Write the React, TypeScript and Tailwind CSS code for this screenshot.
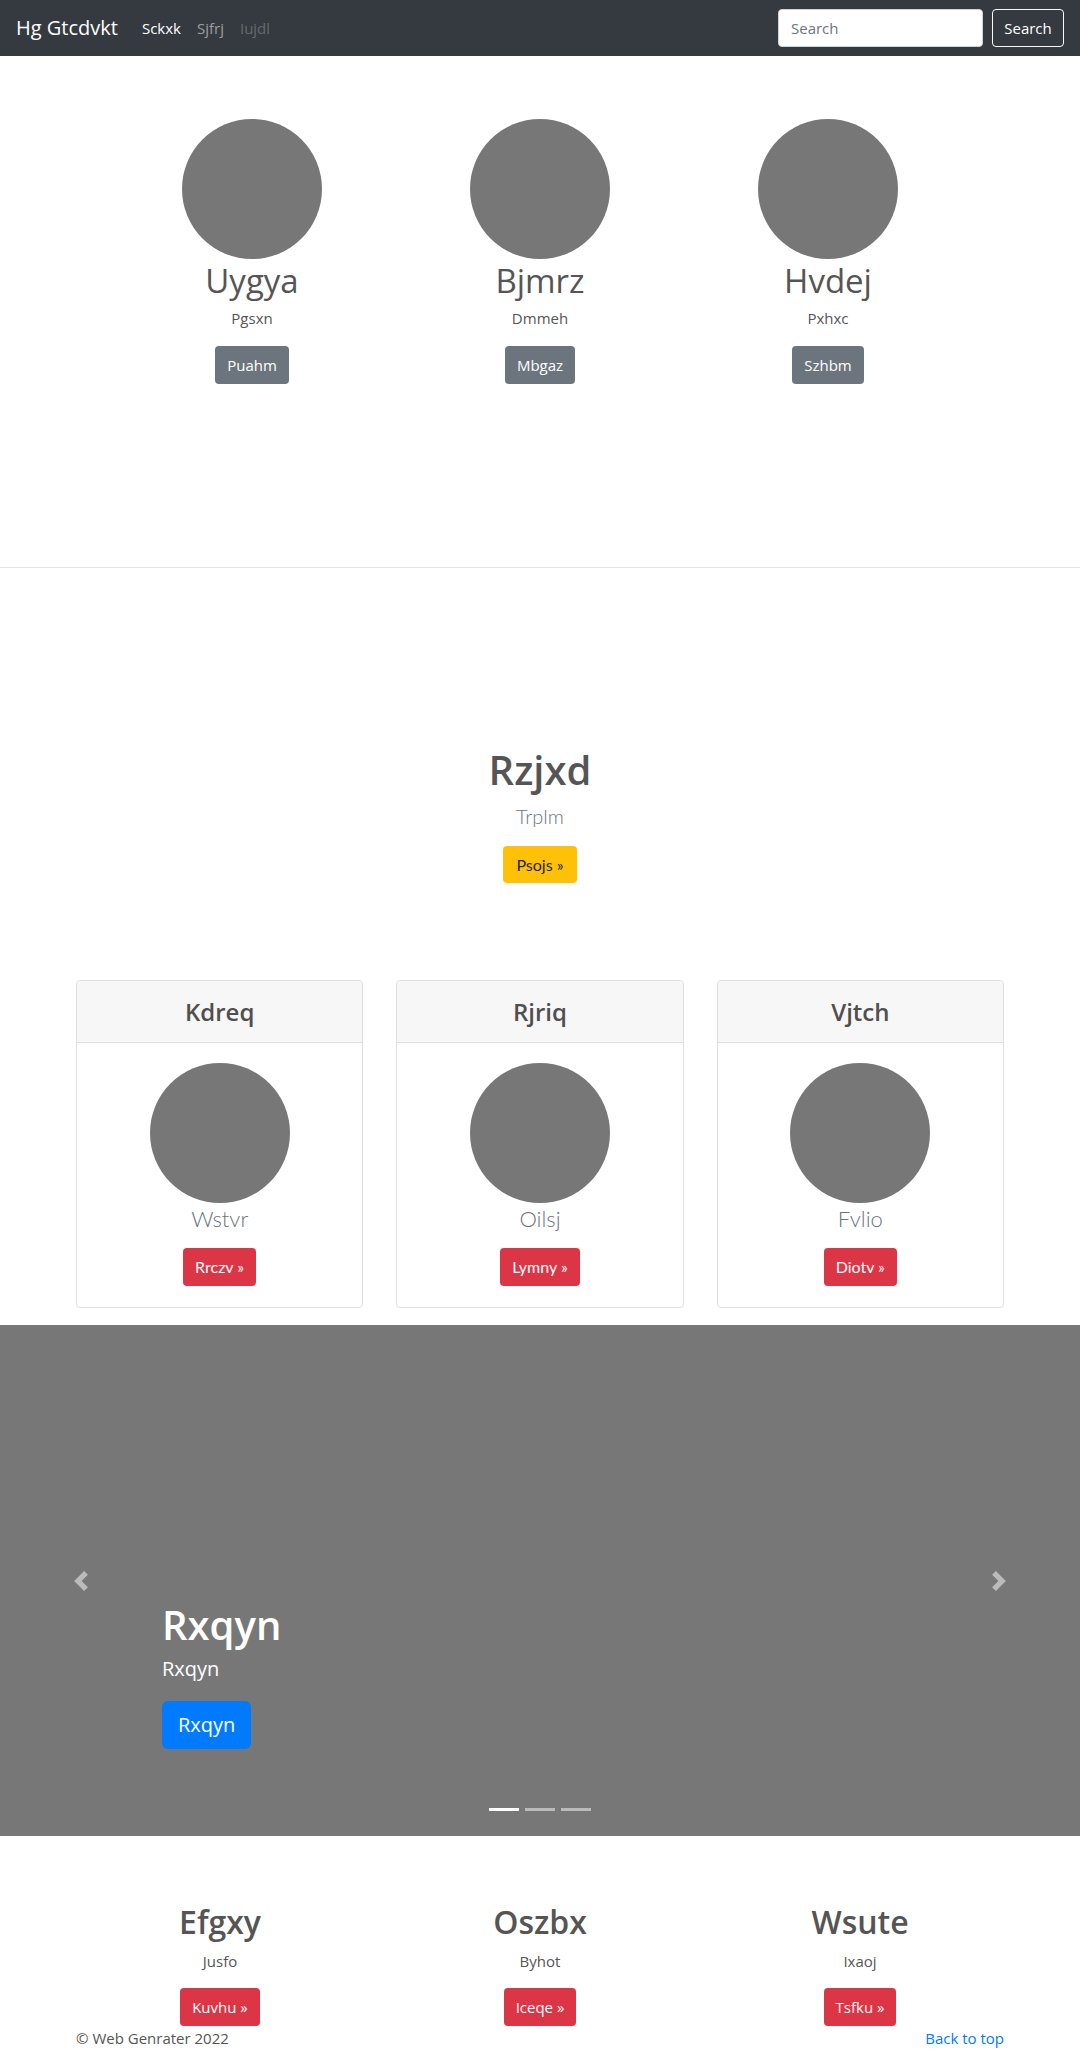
import React from "react";

const sans = { fontFamily: '"Open Sans", "Noto Sans", sans-serif' };

function Circle() {
  return <div className="w-[140px] h-[140px] rounded-full bg-[#777777]" />;
}

const top = [
  { t: "Uygya", s: "Pgsxn", b: "Puahm" },
  { t: "Bjmrz", s: "Dmmeh", b: "Mbgaz" },
  { t: "Hvdej", s: "Pxhxc", b: "Szhbm" },
];

const cards = [
  { h: "Kdreq", s: "Wstvr", b: "Rrczv »" },
  { h: "Rjriq", s: "Oilsj", b: "Lymny »" },
  { h: "Vjtch", s: "Fvlio", b: "Diotv »" },
];

const bottom = [
  { t: "Efgxy", s: "Jusfo", b: "Kuvhu »" },
  { t: "Oszbx", s: "Byhot", b: "Iceqe »" },
  { t: "Wsute", s: "Ixaoj", b: "Tsfku »" },
];

export default function App() {
  return (
    <div className="w-[1080px] h-[2050px] overflow-hidden bg-white text-[#555]" style={sans}>
      {/* Navbar */}
      <nav className="h-[56px] bg-[#343a40] flex items-center px-4">
        <span className="text-white text-[20px] leading-[30px] mr-4">Hg Gtcdvkt</span>
        <div className="flex items-center text-[15px]">
          <span className="px-2 text-white">Sckxk</span>
          <span className="px-2 text-white/50">Sjfrj</span>
          <span className="px-2 text-white/25">Iujdl</span>
        </div>
        <div className="ml-auto flex items-center">
          <input
            className="w-[205px] h-[38px] rounded bg-white px-3 text-[15px] text-[#495057] placeholder:text-[#6c757d] border border-[#ced4da] outline-none"
            placeholder="Search"
            style={sans}
          />
          <button className="ml-[9px] h-[38px] w-[72px] rounded border border-[#f8f9fa] text-white text-[15px]">
            Search
          </button>
        </div>
      </nav>

      {/* Top three */}
      <section className="h-[512px] pt-[63px] border-b border-[#e5e5e5]">
        <div className="w-[864px] mx-auto grid grid-cols-3">
          {top.map((c) => (
            <div key={c.t} className="flex flex-col items-center">
              <Circle />
              <h2 className="mt-[2px] text-[33px] leading-[40px] font-normal">{c.t}</h2>
              <p className="mt-[5px] text-[15px] leading-[24px]">{c.s}</p>
              <button className="mt-[16px] h-[38px] px-3 rounded bg-[#6c757d] text-white text-[15px]">
                {c.b}
              </button>
            </div>
          ))}
        </div>
      </section>

      {/* Jumbotron */}
      <section className="pt-[178px] flex flex-col items-center">
        <h1 className="text-[40px] leading-[48px] font-semibold">Rzjxd</h1>
        <p className="mt-[7px] text-[20px] leading-[30px] font-light text-[#6c757d]" style={{ fontFamily: "Lato, sans-serif" }}>
          Trplm
        </p>
        <button
          className="mt-[15px] h-[37px] w-[74px] rounded bg-[#ffc107] text-[#212529] text-[16px]"
          style={{ fontFamily: "Lato, sans-serif" }}
        >
          Psojs »
        </button>
      </section>

      {/* Cards */}
      <section className="mt-[97px] w-[928px] mx-auto grid grid-cols-3 gap-[33px]">
        {cards.map((c) => (
          <div key={c.h} className="h-[328px] rounded border border-[#dfdfdf] flex flex-col">
            <div className="h-[62px] bg-[#f7f7f7] border-b border-[#dfdfdf] flex items-center justify-center rounded-t">
              <span className="text-[24px] font-semibold text-[#4f4f4f]">{c.h}</span>
            </div>
            <div className="flex flex-col items-center pt-[20px]" style={{ fontFamily: "Lato, sans-serif" }}>
              <Circle />
              <p className="mt-[1px] text-[22px] leading-[30px] font-light text-[#6c757d]">{c.s}</p>
              <button className="mt-[14px] h-[38px] px-3 rounded bg-[#dc3545] text-white text-[16px]">
                {c.b}
              </button>
            </div>
          </div>
        ))}
      </section>

      {/* Carousel */}
      <section className="relative mt-[17px] h-[511px] bg-[#777777] flex flex-col justify-end pl-[162px] pb-[87px]">
        <h2 className="text-white text-[40px] leading-[48px] font-semibold">Rxqyn</h2>
        <p className="mt-[7px] text-white text-[20px] leading-[26px]">Rxqyn</p>
        <div className="mt-[19px]">
          <button className="h-[48px] px-4 rounded-md bg-[#007bff] text-white text-[20px]">Rxqyn</button>
        </div>
        <div className="absolute left-0 top-0 h-full w-[162px] flex items-center justify-center opacity-50">
          <svg width="20" height="20" viewBox="0 0 8 8">
            <path fill="#fff" d="M5.25 0l-4 4 4 4 1.5-1.5-2.5-2.5 2.5-2.5-1.5-1.5z" />
          </svg>
        </div>
        <div className="absolute right-0 top-0 h-full w-[162px] flex items-center justify-center opacity-50">
          <svg width="20" height="20" viewBox="0 0 8 8">
            <path fill="#fff" d="M2.75 0l-1.5 1.5 2.5 2.5-2.5 2.5 1.5 1.5 4-4-4-4z" />
          </svg>
        </div>
        <div className="absolute left-0 right-0 bottom-[25px] flex justify-center gap-[6px]">
          <span className="w-[30px] h-[3px] bg-white" />
          <span className="w-[30px] h-[3px] bg-white/50" />
          <span className="w-[30px] h-[3px] bg-white/50" />
        </div>
      </section>

      {/* Bottom three */}
      <section className="pt-[67px] w-[960px] mx-auto grid grid-cols-3">
        {bottom.map((c) => (
          <div key={c.t} className="flex flex-col items-center">
            <h2 className="text-[32px] leading-[38px] font-semibold">{c.t}</h2>
            <p className="mt-[8px] text-[15px] leading-[24px]">{c.s}</p>
            <button className="mt-[15px] h-[38px] px-3 rounded bg-[#dc3545] text-white text-[15px]">
              {c.b}
            </button>
          </div>
        ))}
      </section>

      {/* Footer */}
      <footer className="w-[928px] mx-auto flex justify-between text-[15px] leading-[24px]">
        <span className="text-[#555]">© Web Genrater 2022</span>
        <span className="text-[#007bff]">Back to top</span>
      </footer>
    </div>
  );
}
